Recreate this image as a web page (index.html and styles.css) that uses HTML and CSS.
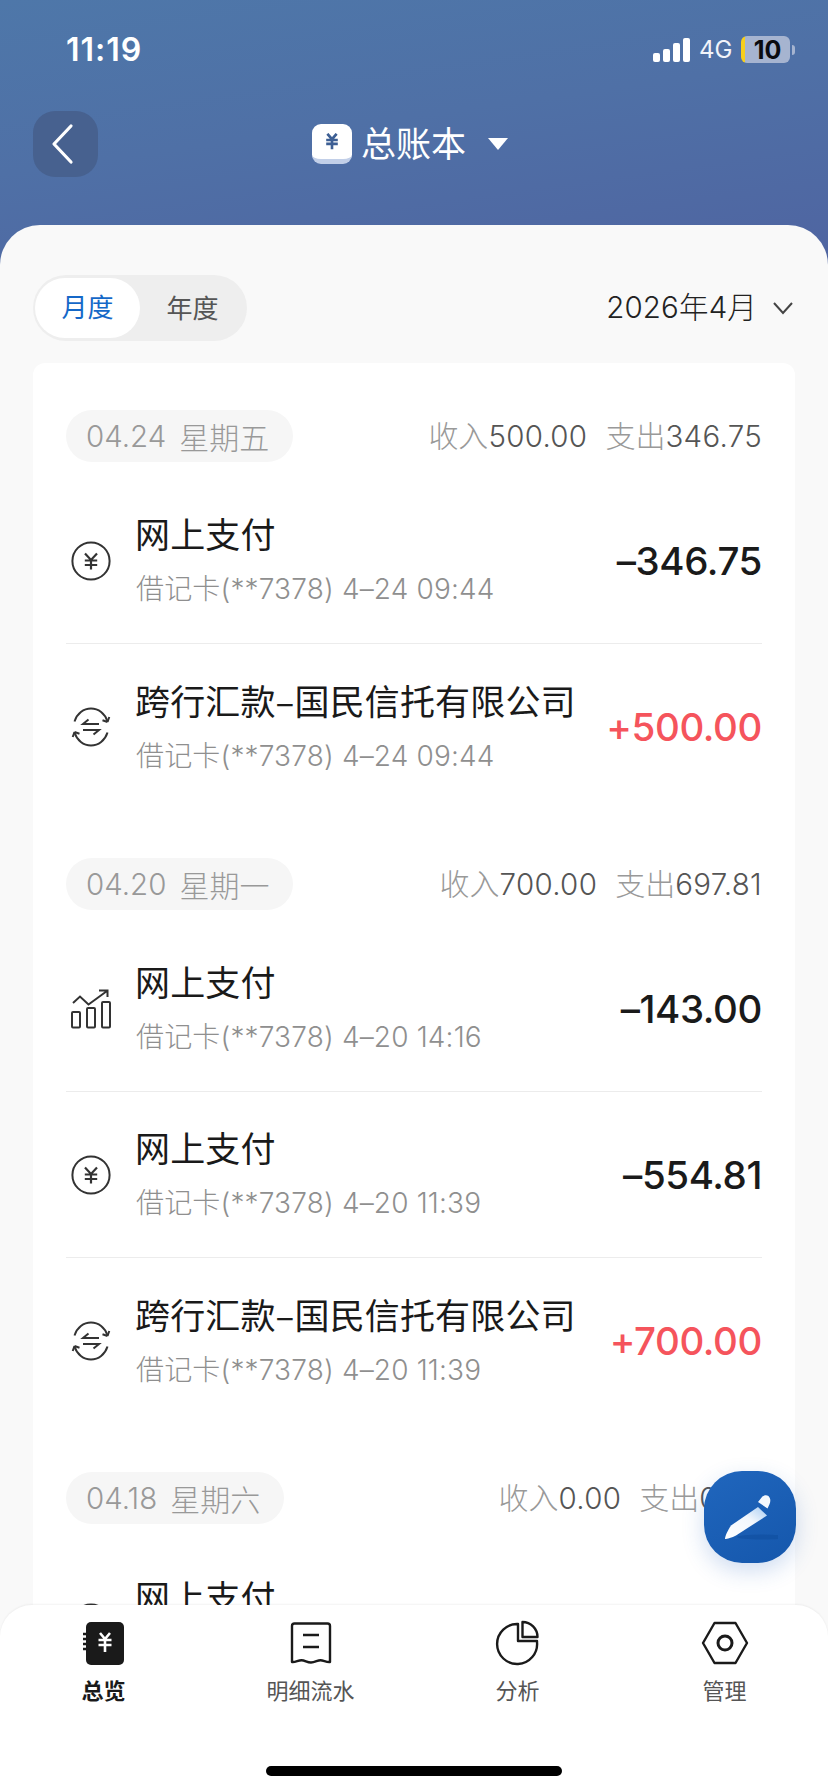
FILE: index.html
```html
<!DOCTYPE html>
<html lang="zh-CN">
<head>
<meta charset="utf-8">
<title>总账本</title>
<link rel="stylesheet" href="styles.css">
</head>
<body>
<svg class="defs" width="0" height="0" aria-hidden="true">
  <symbol id="i-yuan" viewBox="0 0 40 40">
    <circle cx="20" cy="20" r="18.6" fill="none" stroke="#333" stroke-width="2"/>
    <path d="M14 12.500l6 6.500 6-6.500M13.800 19.500h12.400M13.800 24h12.400M20 19v9.500" fill="none" stroke="#333" stroke-width="2.200"/>
  </symbol>
  <symbol id="i-swap" viewBox="0 0 40 40">
    <path d="M3.500 14.500C6 6.500 12.500 1.500 20 1.500s14 5 16.500 13M36.500 25.500C34 33.500 27.500 38.500 20 38.500S6 33.500 3.500 25.500" fill="none" stroke="#333" stroke-width="2"/>
    <path d="M36.500 15l1.800-5M36.500 15l-5-1.800M3.500 25l-1.800 5M3.500 25l5 1.800" fill="none" stroke="#333" stroke-width="2"/>
    <path d="M28 17H12l5.500-4.500M12 23h16l-5.500 4.500" fill="none" stroke="#333" stroke-width="2"/>
  </symbol>
  <symbol id="i-chart" viewBox="0 0 40 40">
    <g fill="none" stroke="#333" stroke-width="2">
      <rect x="1" y="23" width="8" height="15.500" rx="1"/>
      <rect x="16" y="19" width="8" height="19.500" rx="1"/>
      <rect x="31" y="13" width="8" height="25.500" rx="1"/>
      <path d="M2 14l7-6.500 8.500 8L36 2M28 1.500h8.500V8" />
    </g>
  </symbol>
</svg>

<div class="page">
  <header class="hero">
    <div class="status">
      <span class="time">11:19</span>
      <div class="status-right">
        <span class="signal"><i class="b1"></i><i class="b2"></i><i class="b3"></i><i class="b4"></i></span>
        <span class="net">4G</span>
        <span class="battery"><span class="battery-text">10</span></span>
        <span class="nub"></span>
      </div>
    </div>
    <div class="nav">
      <button class="back" aria-label="返回">
        <svg width="24" height="42" viewBox="0 0 24 42"><path d="M20 3L3 21l17 18" fill="none" stroke="#fff" stroke-width="3.200" stroke-linecap="round" stroke-linejoin="round"/></svg>
      </button>
      <div class="ledger">
        <span class="ledger-icon">
          <svg width="14" height="17" viewBox="0 0 18 22"><path d="M3 1l6 7 6-7M1.500 9h15M1.500 14h15M9 8v13" fill="none" stroke="#3d5f94" stroke-width="3.400"/></svg>
        </span>
        <span class="ledger-name">总账本</span>
        <span class="caret"></span>
      </div>
    </div>
  </header>

  <main class="sheet">
    <div class="filters">
      <div class="toggle">
        <span class="seg seg-on">月度</span>
        <span class="seg">年度</span>
      </div>
      <div class="month">
        <span class="month-text">2026年4月</span>
        <svg width="22" height="14" viewBox="0 0 22 14"><path d="M2 2l9 10 9-10" fill="none" stroke="#444" stroke-width="2"/></svg>
      </div>
    </div>

    <div class="card">
      <section class="group">
        <div class="group-head">
          <span class="pill"><span>04.24</span><span class="week">星期五</span></span>
          <span class="totals"><span class="lab">收入</span>500.00<span class="lab lab-gap">支出</span>346.75</span>
        </div>
        <div class="row">
          <svg class="row-icon"><use href="#i-yuan"/></svg>
          <div class="row-text"><div class="title">网上支付</div><div class="sub">借记卡(**7378) 4–24 09:44</div></div>
          <div class="amount">–346.75</div>
        </div>
        <div class="row">
          <svg class="row-icon"><use href="#i-swap"/></svg>
          <div class="row-text"><div class="title">跨行汇款–国民信托有限公司</div><div class="sub">借记卡(**7378) 4–24 09:44</div></div>
          <div class="amount plus">+500.00</div>
        </div>
      </section>

      <section class="group">
        <div class="group-head">
          <span class="pill"><span>04.20</span><span class="week">星期一</span></span>
          <span class="totals"><span class="lab">收入</span>700.00<span class="lab lab-gap">支出</span>697.81</span>
        </div>
        <div class="row">
          <svg class="row-icon"><use href="#i-chart"/></svg>
          <div class="row-text"><div class="title">网上支付</div><div class="sub">借记卡(**7378) 4–20 14:16</div></div>
          <div class="amount">–143.00</div>
        </div>
        <div class="row">
          <svg class="row-icon"><use href="#i-yuan"/></svg>
          <div class="row-text"><div class="title">网上支付</div><div class="sub">借记卡(**7378) 4–20 11:39</div></div>
          <div class="amount">–554.81</div>
        </div>
        <div class="row">
          <svg class="row-icon"><use href="#i-swap"/></svg>
          <div class="row-text"><div class="title">跨行汇款–国民信托有限公司</div><div class="sub">借记卡(**7378) 4–20 11:39</div></div>
          <div class="amount plus">+700.00</div>
        </div>
      </section>

      <section class="group">
        <div class="group-head">
          <span class="pill"><span>04.18</span><span class="week">星期六</span></span>
          <span class="totals"><span class="lab">收入</span>0.00<span class="lab lab-gap">支出</span>0.00</span>
        </div>
        <div class="row">
          <svg class="row-icon"><use href="#i-yuan"/></svg>
          <div class="row-text"><div class="title">网上支付</div><div class="sub">借记卡(**7378) 4–18 10:20</div></div>
        </div>
      </section>
    </div>
  </main>

  <button class="fab" aria-label="记一笔">
    <svg width="56" height="56" viewBox="0 0 56 56">
      <defs>
        <linearGradient id="pen" x1="0" y1="1" x2="1" y2="0">
          <stop offset="0" stop-color="#ffffff"/>
          <stop offset="0.6" stop-color="#f2f7fd"/>
          <stop offset="1" stop-color="#a9cdf2"/>
        </linearGradient>
      </defs>
      <ellipse cx="40" cy="48" rx="25" ry="2.500" fill="#0f4c9c" opacity=".55"/>
      <path d="M36 18L45 26.500 14 46.500C10 48.500 5 50 3 50 3 47 6 41 9 36.500z" fill="url(#pen)"/>
      <path d="M36 13L40 8C43 5 47 6 48 9.500 49 13 47.500 15 45.500 19.500z" fill="#f4f8fd"/>
    </svg>
  </button>

  <nav class="tabs">
    <div class="tab tab-on">
      <svg width="46" height="46" viewBox="0 0 46 46">
        <rect x="5" y="2" width="38" height="43" rx="5" fill="#1a1a1a"/>
        <path d="M2 14h5M2 19h5M2 24h5M2 29h5" stroke="#1a1a1a" stroke-width="2.500"/>
        <path d="M19 13l5 6 5-6M17.500 20h13M17.500 25h13M24 19v13" fill="none" stroke="#fff" stroke-width="2.600"/>
      </svg>
      <span class="tab-label">总览</span>
    </div>
    <div class="tab">
      <svg width="46" height="46" viewBox="0 0 46 46">
        <path d="M4 42V6c0-1.500 1-2.500 2.500-2.500h33c1.500 0 2.500 1 2.500 2.500v36c-3.500.5-6.500-1.800-9.500-1.800s-5.500 2.300-9.500 2.300-6-2.300-9.500-2.300S7.500 42.500 4 42z" fill="none" stroke="#1a1a1a" stroke-width="2.400" stroke-linejoin="round"/>
        <path d="M15 15h16M15 27h16" stroke="#1a1a1a" stroke-width="2.400"/>
      </svg>
      <span class="tab-label">明细流水</span>
    </div>
    <div class="tab">
      <svg width="46" height="46" viewBox="0 0 46 46">
        <path d="M23 4A20 20 0 1 0 42 22V21H23z" fill="none" stroke="#1a1a1a" stroke-width="2.400" stroke-linejoin="round"/>
        <path d="M27.500 2A15 15 0 0 1 42.500 17H27.500z" fill="none" stroke="#1a1a1a" stroke-width="2.400" stroke-linejoin="round"/>
      </svg>
      <span class="tab-label">分析</span>
    </div>
    <div class="tab">
      <svg width="48" height="46" viewBox="0 0 48 46">
        <path d="M13.500 3h21L46 23 34.500 43h-21L2 23z" fill="none" stroke="#1a1a1a" stroke-width="2.400" stroke-linejoin="round"/>
        <circle cx="24" cy="23" r="7" fill="none" stroke="#1a1a1a" stroke-width="3"/>
      </svg>
      <span class="tab-label">管理</span>
    </div>
    <div class="home-bar"></div>
  </nav>
</div>
</body>
</html>
```

FILE: styles.css
```css
* { box-sizing: border-box; }
html, body { margin: 0; padding: 0; }
body {
  width: 828px;
  height: 1792px;
  overflow: hidden;
  font-family: Inter, "Noto Sans CJK SC", sans-serif;
  background: #f9f9f9;
}
.defs { position: absolute; }
.page {
  position: relative;
  width: 828px;
  height: 1792px;
  overflow: hidden;
  background: linear-gradient(172deg, #4e77a9 0%, #4f70a6 45%, #4f64a1 100%) no-repeat 0 0 / 100% 270px, #f9f9f9;
}

/* hero */
.hero { height: 225px; color: #fff; }
.status {
  height: 99px;
  display: flex;
  justify-content: space-between;
  align-items: center;
  padding: 0 33px 0 66px;
}
.time { font-size: 32px; font-weight: 600; letter-spacing: 1px; }
.status-right { display: flex; align-items: center; }
.signal { display: flex; align-items: flex-end; gap: 3px; height: 24px; }
.signal i { display: block; width: 7px; background: #fff; border-radius: 2px; }
.signal .b1 { height: 9px; }
.signal .b2 { height: 13px; }
.signal .b3 { height: 19px; }
.signal .b4 { height: 24px; }
.net { font-size: 24px; margin-left: 9px; width: 42px; color: #f1f4fa; }
.battery {
  width: 49px;
  height: 27px;
  border-radius: 6px;
  background: linear-gradient(90deg, #f7cf1c 0 4px, #a6b4d0 4px);
  display: flex;
  align-items: center;
  justify-content: center;
}
.battery-text { font-size: 25px; font-weight: 700; color: #0b0b10; padding-left: 4px; }
.nub {
  width: 3px;
  height: 10px;
  margin-left: 2px;
  border-radius: 0 4px 4px 0;
  background: #a6b4d0;
}
.nav {
  height: 66px;
  margin-top: 12px;
  padding-left: 33px;
  display: flex;
  align-items: center;
}
.back {
  width: 65px;
  height: 66px;
  border: 0;
  padding: 0 6px 0 0;
  border-radius: 22px;
  background: #47618f;
  display: flex;
  align-items: center;
  justify-content: center;
}
.ledger {
  margin-left: 214px;
  display: flex;
  align-items: center;
}
.ledger-icon {
  width: 40px;
  height: 40px;
  border-radius: 9px;
  background: #fff;
  border-bottom: 5px solid #c2cfe8;
  display: flex;
  align-items: center;
  justify-content: center;
}
.ledger-name {
  font-size: 35px;
  margin-left: 9px;
  padding-bottom: 6px;
  font-family: "Noto Sans CJK SC", sans-serif;
  font-weight: 400;
}
.caret {
  margin-left: 22px;
  width: 0;
  height: 0;
  border-left: 10px solid transparent;
  border-right: 10px solid transparent;
  border-top: 12px solid #fff;
}

/* sheet */
.sheet {
  height: 1567px;
  background: #f9f9f9;
  border-radius: 40px 40px 0 0;
  padding: 50px 33px 0;
}
.filters {
  display: flex;
  justify-content: space-between;
  align-items: center;
  height: 66px;
}
.toggle {
  width: 214px;
  height: 66px;
  border-radius: 33px;
  background: #eeeeee;
  padding: 3px 2px;
  display: flex;
  align-items: center;
}
.seg {
  width: 105px;
  padding-bottom: 4px;
  text-align: center;
  font-size: 26px;
  color: #555;
  font-family: "Noto Sans CJK SC", sans-serif;
}
.seg-on {
  height: 60px;
  line-height: 56px;
  border-radius: 30px;
  background: #fff;
  color: #1568c8;
}
.month {
  display: flex;
  align-items: center;
  gap: 15px;
  font-size: 29.500px;
  font-weight: 300;
  letter-spacing: .15px;
  color: #222;
  padding-right: 1px;
}
.month-text { padding-bottom: 7px; }

/* card */
.card {
  margin-top: 22px;
  height: 1300px;
  background: #fff;
  border-radius: 12px;
  padding: 47px 33px 0;
}
.group + .group { margin-top: 48px; }
.group-head {
  display: flex;
  justify-content: space-between;
  align-items: center;
  height: 52px;
  margin-bottom: 16px;
}
.pill {
  height: 52px;
  padding: 0 24px 0 20px;
  border-radius: 26px;
  background: #f6f6f6;
  color: #999;
  font-size: 29.500px;
  font-weight: 300;
  display: flex;
  align-items: center;
  gap: 13px;
}
.week { font-family: "Noto Sans CJK SC", sans-serif; font-size: 30px; font-weight: 300; }
.totals { font-size: 29.500px; font-weight: 300; letter-spacing: .3px; color: #555; white-space: nowrap; padding-bottom: 4px; }
.lab { color: #999; font-family: "Noto Sans CJK SC", sans-serif; font-weight: 300; font-size: 30px; letter-spacing: 0; }
.lab-gap { margin-left: 18px; }
.row {
  height: 166px;
  display: flex;
  align-items: center;
  border-bottom: 1px solid #ececec;
}
.row:last-child { border-bottom: 0; }
.row-icon { width: 40px; height: 40px; margin-left: 5px; flex: none; }
.row-text { margin-left: 25px; flex: 1; min-width: 0; padding-bottom: 1px; }
.title {
  font-size: 35px;
  line-height: 48px;
  margin-left: -1px;
  letter-spacing: .15px;
  color: #1a1a1a;
  font-family: "Noto Sans CJK SC", sans-serif;
  font-weight: 400;
  white-space: nowrap;
}
.sub { font-size: 28px; font-weight: 300; letter-spacing: .16px; line-height: 44px; margin-top: 10px; color: #8f8f8f; white-space: nowrap; }
.amount {
  font-size: 38.500px;
  font-weight: 500;
  letter-spacing: -.4px;
  color: #1a1a1a;
  white-space: nowrap;
}
.plus { color: #f5545c; }

/* overlays */
.fab {
  position: absolute;
  left: 704px;
  top: 1471px;
  width: 92px;
  height: 92px;
  border: 0;
  padding: 0;
  border-radius: 38px;
  background: linear-gradient(150deg, #2066bd, #1557ac);
  box-shadow: 0 8px 22px rgba(40, 100, 190, .22);
  display: flex;
  align-items: center;
  justify-content: center;
  overflow: hidden;
}
.tabs {
  position: absolute;
  left: 0;
  right: 0;
  top: 1605px;
  height: 187px;
  background: #fff;
  border-radius: 32px 32px 0 0;
  box-shadow: 0 -1px 2px rgba(0, 0, 0, .05);
  padding-top: 15px;
  display: grid;
  grid-template-columns: repeat(4, 207px);
  align-items: start;
}
.tab {
  display: flex;
  flex-direction: column;
  align-items: center;
  gap: 8px;
}
.tab-label { font-size: 22px; line-height: 30px; color: #555; font-family: "Noto Sans CJK SC", sans-serif; }
.tab-on .tab-label { color: #1a1a1a; font-weight: 700; }
.home-bar {
  position: absolute;
  left: 266px;
  top: 161px;
  width: 296px;
  height: 10px;
  border-radius: 5px;
  background: #000;
}
```
